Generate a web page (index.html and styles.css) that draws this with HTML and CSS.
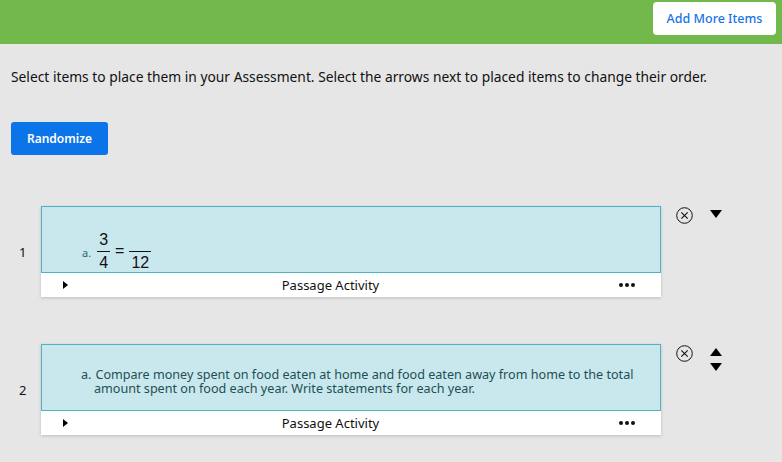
FILE: index.html
```html
<!DOCTYPE html>
<html lang="en">
<head>
<meta charset="utf-8">
<title>Assessment</title>
<link rel="stylesheet" href="styles.css">
</head>
<body>
<header class="topbar">
  <button class="add-btn">Add More Items</button>
</header>
<main class="content">
  <p class="intro">Select items to place them in your Assessment. Select the arrows next to placed items to change their order.</p>
  <button class="randomize">Randomize</button>
  <div class="items">
    <div class="row">
      <div class="num">1</div>
      <div class="card">
        <div class="card-body body-math">
          <span class="label">a.</span>
          <span class="frac"><span class="top">3</span><span class="bot">4</span></span>
          <span class="eq">=</span>
          <span class="frac"><span class="top blank">&nbsp;</span><span class="bot">12</span></span>
        </div>
        <div class="card-foot">
          <span class="play"></span>
          <span class="foot-label">Passage Activity</span>
          <span class="dots"><i></i><i></i><i></i></span>
        </div>
      </div>
      <div class="controls">
        <svg class="close" width="17" height="17" viewBox="0 0 17 17"><circle cx="8.5" cy="8.5" r="7.8" fill="none" stroke="#111" stroke-width="1"/><path d="M5.3 5.3L11.7 11.7M11.7 5.3L5.3 11.7" stroke="#111" stroke-width="1.1"/></svg>
        <div class="arrows">
          <svg width="12" height="8" viewBox="0 0 12 8"><path d="M0 0H12L6 8Z" fill="#000"/></svg>
        </div>
      </div>
    </div>
    <div class="row">
      <div class="num">2</div>
      <div class="card">
        <div class="card-body body-text">
          <p class="question"><span class="qlabel">a.</span>Compare money spent on food eaten at home and food eaten away from home to the total amount spent on food each year. Write statements for each year.</p>
        </div>
        <div class="card-foot">
          <span class="play"></span>
          <span class="foot-label">Passage Activity</span>
          <span class="dots"><i></i><i></i><i></i></span>
        </div>
      </div>
      <div class="controls">
        <svg class="close" width="17" height="17" viewBox="0 0 17 17"><circle cx="8.5" cy="8.5" r="7.8" fill="none" stroke="#111" stroke-width="1"/><path d="M5.3 5.3L11.7 11.7M11.7 5.3L5.3 11.7" stroke="#111" stroke-width="1.1"/></svg>
        <div class="arrows">
          <svg width="12" height="8" viewBox="0 0 12 8"><path d="M0 8H12L6 0Z" fill="#000"/></svg>
          <svg width="12" height="8" viewBox="0 0 12 8"><path d="M0 0H12L6 8Z" fill="#000"/></svg>
        </div>
      </div>
    </div>
  </div>
</main>
</body>
</html>
```
FILE: styles.css
```css
* { box-sizing: border-box; }
body {
  margin: 0;
  background: #e6e6e6;
  font-family: "Noto Sans", "Open Sans", sans-serif;
  color: #111;
  width: 782px;
  height: 462px;
  overflow: hidden;
}
.topbar {
  height: 44px;
  background: #72b84a;
  display: flex;
  justify-content: flex-end;
  align-items: flex-start;
  padding: 2px 6px 0 0;
}
.add-btn {
  width: 123px;
  height: 33px;
  background: #fff;
  border: none;
  border-radius: 4px;
  color: #1a73e8;
  font-family: "Noto Sans", sans-serif;
  font-size: 12.5px;
  font-weight: 500;
  padding: 0;
}
.content {
  padding: 0 11px;
}
.intro {
  margin: 25px 0 0;
  font-size: 13.8px;
  line-height: 16px;
}
.randomize {
  display: block;
  margin-top: 37px;
  width: 97px;
  height: 33px;
  background: #0b74e8;
  color: #fff;
  border: none;
  border-radius: 3px;
  font-family: "Noto Sans", sans-serif;
  font-size: 12px;
  font-weight: 600;
  padding: 0;
}
.items {
  margin-top: 51px;
  display: flex;
  flex-direction: column;
  gap: 47px;
}
.row {
  display: flex;
  align-items: flex-start;
}
.num {
  width: 30px;
  padding-left: 8px;
  align-self: center;
  font-size: 13px;
}
.card {
  width: 620px;
  box-shadow: 0 1px 3px rgba(0,0,0,0.18);
}
.card-body {
  height: 67px;
  background: #c9e8ed;
  border: 1px solid #4fb3c2;
}
.body-math {
  display: flex;
  align-items: flex-start;
  padding: 24px 0 0 40px;
  font-family: "Liberation Sans", Arial, sans-serif;
}
.label {
  font-family: "Noto Sans", sans-serif;
  font-size: 11px;
  line-height: 14px;
  color: #2a6a70;
  margin: 15px 6px 0 0;
}
.frac {
  display: inline-flex;
  flex-direction: column;
  align-items: center;
  font-size: 16px;
  line-height: 18px;
}
.frac .top {
  border-bottom: 1px solid #111;
  padding: 0 2px 2px;
  align-self: stretch;
  text-align: center;
}
.frac .bot { padding: 2px 2px 0; }
.frac .blank { width: 22px; }
.eq {
  font-size: 16px;
  line-height: 18px;
  margin: 11px 5px 0 5px;
}
.body-text {
  padding: 23px 0 0 39px;
}
.question {
  margin: 0;
  width: 575px;
  font-size: 12.6px;
  line-height: 14px;
  color: #1e4f54;
  padding-left: 13px;
  text-indent: -13px;
}
.qlabel { margin-right: 4px; }
.card-foot {
  height: 24px;
  background: #fff;
  display: flex;
  align-items: center;
  padding: 0 26px 0 22px;
}
.play {
  width: 0;
  height: 0;
  border-top: 4px solid transparent;
  border-bottom: 4px solid transparent;
  border-left: 5px solid #000;
}
.foot-label {
  flex: 1;
  text-align: center;
  font-size: 13px;
  margin-right: 26px;
}
.dots {
  display: flex;
  gap: 2px;
}
.dots i {
  width: 4px;
  height: 4px;
  border-radius: 50%;
  background: #111;
}
.controls {
  display: flex;
  margin-left: 15px;
  gap: 17px;
}
.close { margin-top: 1px; display: block; }
.arrows {
  display: flex;
  flex-direction: column;
  gap: 7px;
  margin-top: 4px;
}
.arrows svg { display: block; }
```
